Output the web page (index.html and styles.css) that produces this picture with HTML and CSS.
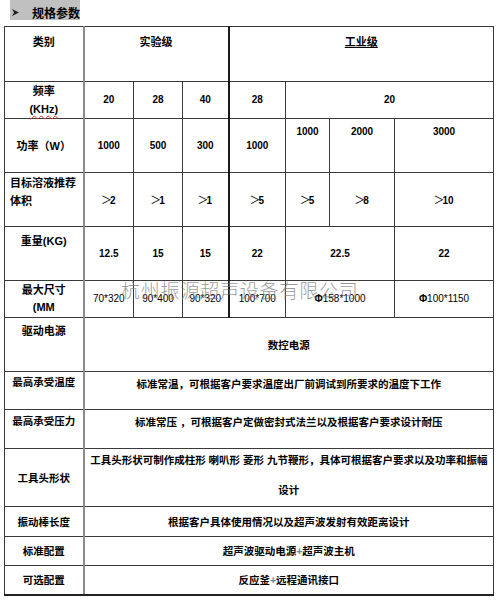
FILE: index.html
```html
<!DOCTYPE html>
<html lang="zh">
<head>
<meta charset="utf-8">
<title>规格参数</title>
<link rel="stylesheet" href="styles.css">
</head>
<body>
<div class="title">
  <svg class="arrow" width="7" height="7" viewBox="0 0 7 7"><polygon points="0,0 7,3.5 0,7 2,3.5" fill="#1e1e1e"/></svg>
  <span class="ttext">规格参数</span>
</div>
<div class="wrap">
<table class="spec">
  <colgroup>
    <col class="c1"><col class="c2"><col class="c3"><col class="c4"><col class="c5"><col class="c6"><col class="c7"><col class="c8">
  </colgroup>
  <tr class="h55">
    <td class="cn top p8">类别</td>
    <td class="cn top p8 sep" colspan="3">实验级</td>
    <td class="cn top p8" colspan="4"><span class="ul">工业级</span></td>
  </tr>
  <tr class="h36">
    <td class="cn lh18">频率<br><span class="wavy">(KHz)</span></td>
    <td>20</td><td>28</td><td class="sep">40</td><td>28</td>
    <td colspan="3">20</td>
  </tr>
  <tr class="h54">
    <td class="cn">功率（W）</td>
    <td>1000</td><td>500</td><td class="sep">300</td><td>1000</td>
    <td class="top p6">1000</td><td class="top p6">2000</td><td class="top p6">3000</td>
  </tr>
  <tr class="h54">
    <td class="cn top lh18 left p1">目标溶液推荐<br>体积</td>
    <td><span class="gt">＞</span>2</td><td><span class="gt">＞</span>1</td><td class="sep"><span class="gt">＞</span>1</td><td><span class="gt">＞</span>5</td>
    <td><span class="gt">＞</span>5</td><td><span class="gt">＞</span>8</td><td><span class="gt">＞</span>10</td>
  </tr>
  <tr class="h54">
    <td class="cn top p7">重量(KG)</td>
    <td>12.5</td><td>15</td><td class="sep">15</td><td>22</td>
    <td colspan="2">22.5</td><td>22</td>
  </tr>
  <tr class="h37 reg">
    <td class="cn top lh17 p1">最大尺寸<br>(MM</td>
    <td>70*320</td><td>90*400</td><td class="sep">90*320</td><td>100*700</td>
    <td colspan="2"><b class="phi">Φ</b>158*1000</td><td><b class="phi">Φ</b>100*1150</td>
  </tr>
  <tr class="h54">
    <td class="cn top p6">驱动电源</td>
    <td class="lo" colspan="7">数控电源</td>
  </tr>
  <tr class="h38">
    <td class="lo top p3">最高承受温度</td>
    <td class="lo top p5" colspan="7">标准常温，可根据客户要求温度出厂前调试到所要求的温度下工作</td>
  </tr>
  <tr class="h39">
    <td class="lo top p4">最高承受压力</td>
    <td class="lo top p5" colspan="7">标准常压 ，可根据客户定做密封式法兰以及根据客户要求设计耐压</td>
  </tr>
  <tr class="h58">
    <td class="lo">工具头形状</td>
    <td class="lo top p3" colspan="7">
      <div class="l1">工具头形状可制作成柱形 喇叭形 菱形 九节鞭形，具体可根据客户要求以及功率和振幅</div>
      <div class="l2">设计</div>
    </td>
  </tr>
  <tr class="h30">
    <td class="lo">振动棒长度</td>
    <td class="lo" colspan="7">根据客户具体使用情况以及超声波发射有效距离设计</td>
  </tr>
  <tr class="h29">
    <td class="lo">标准配置</td>
    <td class="lo" colspan="7">超声波驱动电源<span class="plus">+</span>超声波主机</td>
  </tr>
  <tr class="h29 last">
    <td class="lo">可选配置</td>
    <td class="lo" colspan="7">反应釜<span class="plus">+</span>远程通讯接口</td>
  </tr>
</table>
<div class="watermark">杭州振源超声设备有限公司</div>
</div>
</body>
</html>
```
FILE: styles.css
```css
* { box-sizing: border-box; }
html, body { margin: 0; padding: 0; background: #fff; }
body {
  width: 496px;
  font-family: "Liberation Sans", "Noto Sans CJK SC", sans-serif;
  color: #000;
}
.title {
  margin-left: 10px;
  width: 70px;
  height: 20px;
  background: #c0c0c0;
  display: flex;
  align-items: center;
  padding-top: 5px;
}
.arrow { margin-left: 2px; flex: none; }
.ttext {
  margin-left: 13px;
  font-family: "Noto Sans CJK SC", sans-serif;
  font-weight: bold;
  font-size: 12px;
  line-height: 14px;
}
.wrap {
  position: relative;
  margin: 6px 0 0 4px;
  width: 489px;
}
.spec {
  width: 489px;
  table-layout: fixed;
  border-collapse: collapse;
  border: 1px solid #2a2a2a;
}
.c1 { width: 79px; }
.c2 { width: 50px; }
.c3 { width: 49px; }
.c4 { width: 46px; }
.c5 { width: 57px; }
.c6 { width: 44px; }
.c7 { width: 65px; }
.c8 { width: 99px; }
.spec td {
  border: 1px solid #3a3a3a;
  text-align: center;
  vertical-align: middle;
  font-weight: bold;
  font-size: 10px;
  line-height: 14px;
  padding: 0;
  white-space: nowrap;
  overflow: visible;
}
.spec td:first-child { border-right: 2px solid #8a8a8a; }
.spec td.sep { border-right: 2px solid #1a1a1a; }
.spec .last td { border-bottom: 2px solid #222; }
.spec td.cn { font-size: 11px; }
.spec td.lo { font-size: 10.5px; }
.spec td.top { vertical-align: top; }
.spec td.left { text-align: left; padding-left: 5px; }
.spec td.lh18 { line-height: 18px; }
.spec td.lh17 { line-height: 17px; }
.spec td.p1 { padding-top: 1px; }
.spec td.p3 { padding-top: 3px; }
.spec td.p4 { padding-top: 4px; }
.spec td.p5 { padding-top: 5px; }
.spec td.p6 { padding-top: 6px; }
.spec td.p7 { padding-top: 7px; }
.spec td.p8 { padding-top: 8px; }
.h55 { height: 55px; }
.h54 { height: 54px; }
.h58 { height: 58px; }
.h39 { height: 39px; }
.h38 { height: 38px; }
.h37 { height: 37px; }
.h36 { height: 36px; }
.h30 { height: 30px; }
.h29 { height: 29px; }
.reg td { font-weight: normal; }
.reg td.cn { font-weight: bold; }
.phi { font-weight: bold; font-size: 10px; }
.ul { text-decoration: underline; }
.wavy {
  text-decoration: underline wavy #e03030;
  text-decoration-thickness: 1px;
  text-underline-offset: 2px;
}
.gt {
  font-family: "Noto Sans CJK SC", sans-serif;
  font-size: 11px;
  font-weight: normal;
  margin-left: -1px;
  margin-right: -2px;
}
.l1 { line-height: 16px; }
.l2 { line-height: 16px; margin-top: 14px; }
.plus { color: #5f86b8; }
.watermark {
  position: absolute;
  left: 117px;
  top: 252px;
  font-family: "Noto Sans CJK SC", sans-serif;
  font-weight: 300;
  font-size: 19px;
  letter-spacing: 0.8px;
  line-height: 24px;
  color: rgba(120, 120, 120, 0.75);
  white-space: nowrap;
  pointer-events: none;
}
```
